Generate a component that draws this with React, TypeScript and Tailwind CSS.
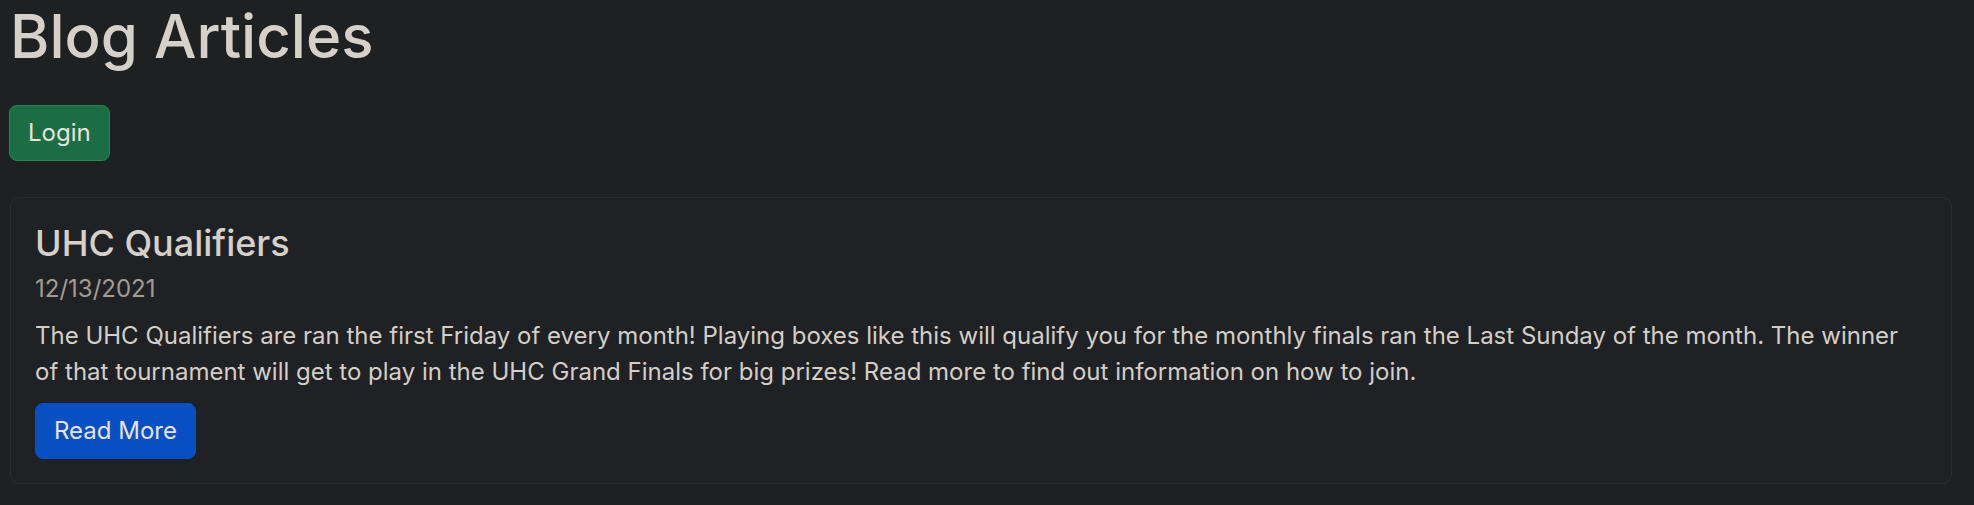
import React from "react";

export default function App() {
  const font = { fontFamily: "Inter, 'Noto Sans', sans-serif" };
  return (
    <div className="min-h-[505px] w-full bg-[#1f2022] pl-[9px] pr-[22px] pt-0 pb-[20px]" style={font}>
      <h1 className="m-0 text-[60px] leading-[72px] font-medium text-[#d5d1ca] pl-[1px]">Blog Articles</h1>
      <div className="mt-[33px]">
        <button className="h-[56px] px-[18px] rounded-[8px] border-[1.5px] border-[#22894f] bg-[#1b6d43] text-[24px] leading-[36px] text-[#e6e3de]">
          Login
        </button>
      </div>
      <div className="mt-[36px] ml-[1px] rounded-[9px] border-[1.5px] border-[#2a2c2f] bg-[#202124] p-[24px]">
        <h5 className="m-0 text-[36px] leading-[43px] font-medium text-[#d5d1ca]">UHC Qualifiers</h5>
        <div className="mt-[6px] text-[24px] leading-[36px] text-[#a29c93]">12/13/2021</div>
        <p className="mt-[11px] m-0 text-[24px] leading-[36px] text-[#d3cfc8]">
          The UHC Qualifiers are ran the first Friday of every month! Playing boxes like this will qualify you for the monthly finals ran the Last Sunday of the month. The winner of that tournament will get to play in the UHC Grand Finals for big prizes! Read more to find out information on how to join.
        </p>
        <button className="mt-[13px] h-[56px] px-[18px] rounded-[8px] border-[1.5px] border-[#0650c4] bg-[#0650c4] text-[24px] leading-[36px] text-[#e6e3de]">
          Read More
        </button>
      </div>
    </div>
  );
}
